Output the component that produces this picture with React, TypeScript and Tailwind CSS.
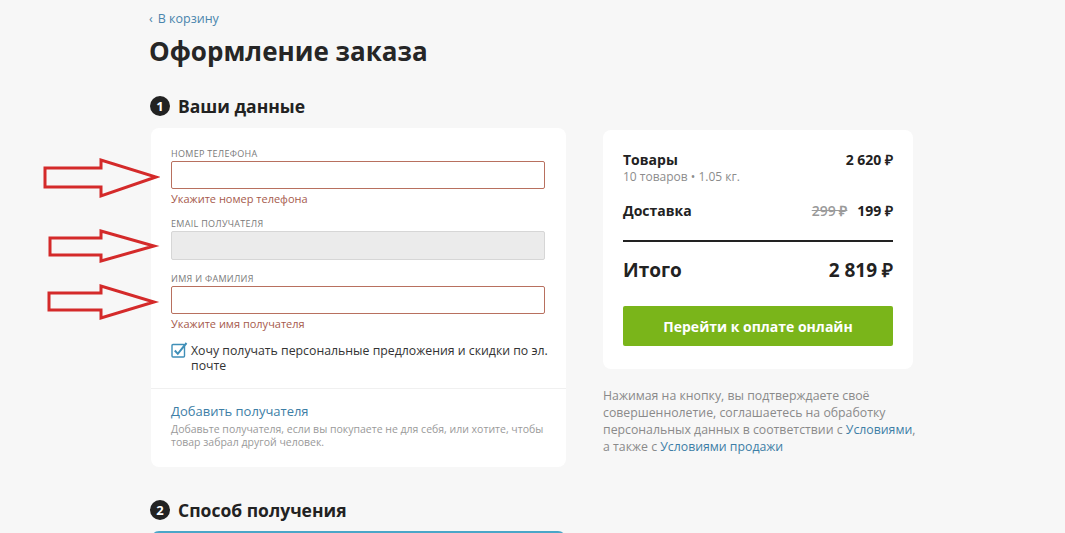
import React from 'react'

function StepBadge({ n }: { n: number }) {
  return (
    <span className="w-[20px] h-[20px] rounded-full bg-[#222] text-white text-[13px] font-bold flex items-center justify-center leading-none">
      {n}
    </span>
  )
}

function Field({ label, error, disabled }: { label: string; error?: string; disabled?: boolean }) {
  return (
    <div>
      <div className="text-[9px] leading-[12px] tracking-[0.3px] text-[#7a7a7a] uppercase">{label}</div>
      <div
        className={
          disabled
            ? 'mt-[1px] h-[29px] rounded-[2px] border border-[#d6d6d6] bg-[#ebebeb]'
            : 'mt-[1px] h-[28px] rounded-[2px] border border-[#b8705f] bg-white'
        }
      />
      {error && <div className="mt-[3px] text-[11px] leading-[14px] text-[#a65a4c]">{error}</div>}
    </div>
  )
}

function Arrows() {
  return (
    <svg className="absolute left-0 top-[150px]" width="160" height="180" viewBox="0 150 160 180" fill="none">
      <g stroke="#d42a2a" strokeWidth="3" strokeLinejoin="miter">
        <path d="M45 168 L101 168 L101 160 L156 177 L101 196 L101 187 L45 187 Z" />
        <path d="M50 238 L101 238 L101 231 L154 246 L101 261 L101 255 L50 255 Z" />
        <path d="M49 293 L101 293 L101 286 L154 302 L101 318 L101 310 L49 310 Z" />
      </g>
    </svg>
  )
}

export default function App() {
  return (
    <div className="relative min-h-screen bg-[#f7f7f7] font-['Open_Sans',sans-serif] text-[#222] overflow-hidden">
      <Arrows />
      <div className="pl-[149px] pt-[11px]">
        <div className="flex items-center gap-[5px] text-[12.5px] leading-[16px] text-[#4a85ad]">
          <span>‹</span>
          <span>В корзину</span>
        </div>
        <h1 className="mt-[8px] text-[26px] leading-[32px] font-bold text-[#262626]">Оформление заказа</h1>

        <div className="mt-[27px] flex gap-[37px]">
          <div className="w-[417px] pl-[1px]">
            <div className="flex items-center gap-[8px] h-[24px]">
              <StepBadge n={1} />
              <span className="text-[17.5px] font-bold leading-[24px]">Ваши данные</span>
            </div>

            <div className="mt-[10px] ml-[1px] bg-white rounded-[8px]">
              <div className="pt-[20px] pl-[20px] pr-[21px] pb-[15px]">
                <Field label="Номер телефона" error="Укажите номер телефона" />
                <div className="mt-[12px]">
                  <Field label="Email получателя" disabled />
                </div>
                <div className="mt-[13px]">
                  <Field label="Имя и фамилия" error="Укажите имя получателя" />
                </div>
                <div className="mt-[12px] flex items-start gap-[3px] mr-[-6px]">
                  <svg width="17" height="16" viewBox="0 0 17 16" className="shrink-0 mt-[-1px]" fill="none">
                    <rect x="1" y="2.5" width="12.5" height="12.5" rx="1" stroke="#3f8fb8" strokeWidth="1.4" />
                    <path d="M3.8 8.5 L6.8 11.8 L15.5 1" stroke="#3f8fb8" strokeWidth="2" />
                  </svg>
                  <span className="text-[12.3px] leading-[15px] text-[#333]">
                    Хочу получать персональные предложения и скидки по эл. почте
                  </span>
                </div>
              </div>
              <div className="border-t border-[#f0f0f0] pt-[13px] pl-[20px] pr-[20px] pb-[18px]">
                <div className="text-[13px] leading-[18px] text-[#3d7ea6]">Добавить получателя</div>
                <div className="mt-[3px] text-[10.5px] leading-[13px] text-[#9a9a9a]">
                  Добавьте получателя, если вы покупаете не для себя, или хотите, чтобы товар забрал другой человек.
                </div>
              </div>
            </div>

            <div className="mt-[31px] flex items-center gap-[8px] h-[24px]">
              <StepBadge n={2} />
              <span className="text-[17.5px] font-bold leading-[24px]">Способ получения</span>
            </div>
            <div className="mt-[9px] ml-[1px] h-[40px] rounded-[8px] border-2 border-[#4aa6c8] bg-white" />
          </div>

          <div className="w-[310px] mt-[36px]">
            <div className="bg-white rounded-[8px] px-[20px] pt-[21px] pb-[23px]">
              <div className="flex justify-between text-[14px] leading-[18px] font-bold">
                <span>Товары</span>
                <span>2 620 ₽</span>
              </div>
              <div className="text-[12px] leading-[16px] text-[#8c8c8c]">10 товаров • 1.05 кг.</div>
              <div className="mt-[17px] flex justify-between text-[14px] leading-[18px] font-bold">
                <span>Доставка</span>
                <span className="flex gap-[10px]">
                  <span className="font-semibold text-[#9a9a9a] line-through">299 ₽</span>
                  <span>199 ₽</span>
                </span>
              </div>
              <div className="mt-[20px] h-[2px] bg-[#222]" />
              <div className="mt-[16px] flex justify-between text-[19px] leading-[24px] font-bold">
                <span>Итого</span>
                <span>2 819 ₽</span>
              </div>
              <button className="mt-[24px] w-full h-[40px] rounded-[2px] bg-[#7ab51a] text-white text-[14px] font-bold">
                Перейти к оплате онлайн
              </button>
            </div>
            <p className="mt-[18px] mr-[-12px] text-[12.3px] leading-[17px] text-[#8a8a8a]">
              Нажимая на кнопку, вы подтверждаете своё совершеннолетие, соглашаетесь на обработку персональных данных в
              соответствии с <span className="text-[#3d7ea6]">Условиями</span>, а также с{' '}
              <span className="text-[#3d7ea6]">Условиями продажи</span>
            </p>
          </div>
        </div>
      </div>
    </div>
  )
}
